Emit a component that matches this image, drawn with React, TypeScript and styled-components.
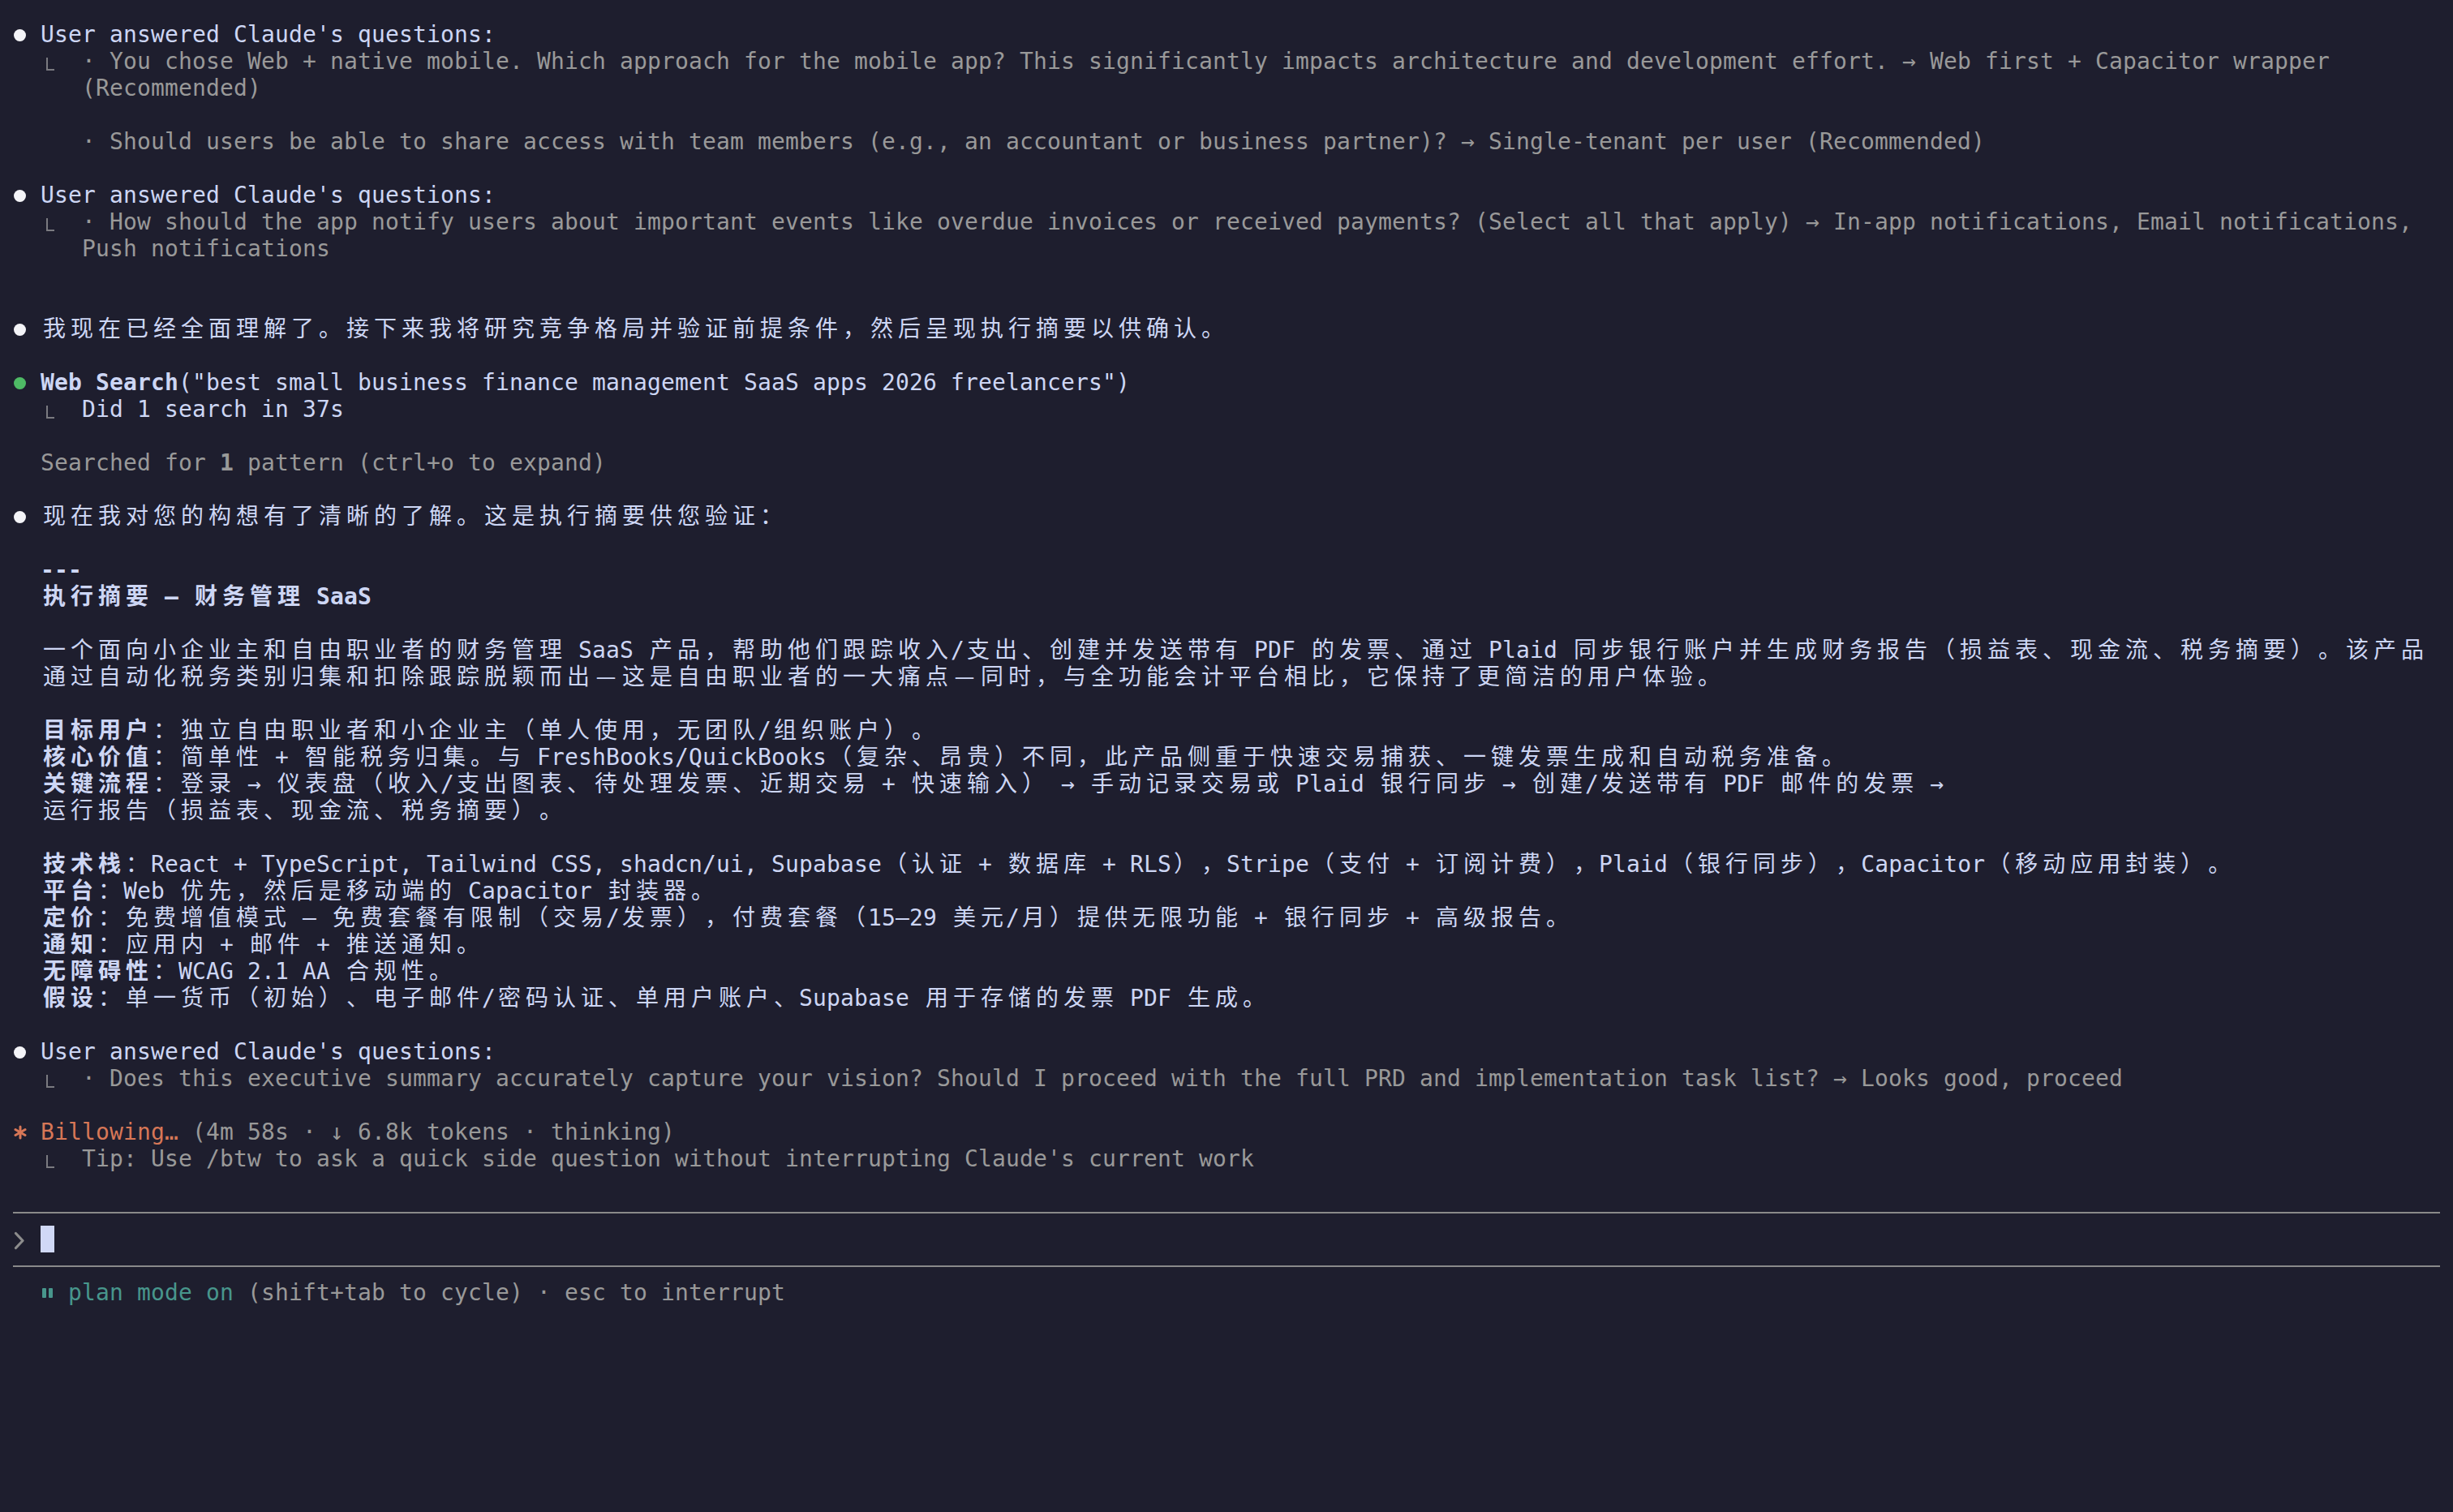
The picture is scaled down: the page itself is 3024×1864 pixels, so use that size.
import React from "react";
import styled, { createGlobalStyle } from "styled-components";

const CELL = 17;

const C = {
  bg: "#1e1e2e",
  text: "#cdd6f4",
  dim: "#999999",
  faint: "#7a7a80",
  white: "#f4f4f8",
  green: "#4eba65",
  orange: "#d77757",
  teal: "#48968c",
  rule: "#8a8a8a",
};

const Global = createGlobalStyle`
  html, body { margin: 0; padding: 0; background: ${C.bg}; }
  #root { min-height: 100vh; }
`;

const Screen = styled.main`
  box-sizing: border-box;
  min-height: 1864px;
  padding: 26px 16px 0;
  background: ${C.bg};
  color: ${C.text};
  font-family: "DejaVu Sans Mono", "Noto Sans CJK SC", monospace;
  font-size: 28px;
  letter-spacing: 0.143px;
  display: flex;
  flex-direction: column;
`;

const Row = styled.div`
  height: 33px;
  line-height: 33px;
  white-space: pre;
  overflow: visible;
`;

const Rule = styled.div`
  height: 33px;
  display: flex;
  align-items: center;
  &::before {
    content: "";
    flex: 1;
    height: 2px;
    background: ${C.rule};
  }
`;

const Wide = styled.span`
  display: inline-block;
  width: ${CELL * 2}px;
  line-height: 28px;
  text-align: center;
  letter-spacing: 0;
  font-family: "Noto Sans CJK SC", "DejaVu Sans Mono", sans-serif;
`;

const Dim = styled.span`
  color: ${C.dim};
`;
const Strong = styled.span`
  font-weight: 700;
`;
const Tone = styled.span<{ $c: string }>`
  color: ${(p) => p.$c};
`;

const Glyph = styled.span<{ $w: number }>`
  display: inline-flex;
  align-items: flex-start;
  vertical-align: top;
  width: ${(p) => p.$w * CELL}px;
  height: 33px;
`;

const Dot = styled.span<{ $c: string }>`
  width: 15px;
  height: 15px;
  margin: 10px 0 0 1px;
  border-radius: 50%;
  background: ${(p) => p.$c};
`;

const ElbowMark = styled.span`
  box-sizing: border-box;
  width: 10px;
  height: 16px;
  margin: 12px 0 0 7px;
  border-left: 2px solid ${C.faint};
  border-bottom: 2px solid ${C.faint};
`;

const PauseBars = styled.span`
  display: flex;
  gap: 3px;
  margin: 11px 0 0 2px;
  & > i {
    display: block;
    width: 5px;
    height: 12px;
    border-radius: 1px;
    background: ${C.teal};
  }
`;

const Cursor = styled.span`
  display: inline-block;
  vertical-align: top;
  width: ${CELL}px;
  height: 33px;
  background: #d0d8f6;
`;

const WIDE =
  /[\u1100-\u115f\u2e80-\u303e\u3041-\u33ff\u3400-\u4dbf\u4e00-\u9fff\ua000-\ua4cf\uac00-\ud7a3\uf900-\ufaff\ufe30-\ufe4f\uff00-\uff60\uffe0-\uffe6\u2014]/;

function t(s: string): React.ReactNode[] {
  const out: React.ReactNode[] = [];
  let buf = "";
  let k = 0;
  for (const ch of Array.from(s)) {
    if (WIDE.test(ch)) {
      if (buf) out.push(buf);
      buf = "";
      out.push(<Wide key={k++}>{ch}</Wide>);
    } else {
      buf += ch;
    }
  }
  if (buf) out.push(buf);
  return out;
}

const Bullet = ({ color = C.white }: { color?: string }) => (
  <Glyph $w={2}>
    <Dot $c={color} />
  </Glyph>
);

const Elbow = () => (
  <>
    {"  "}
    <Glyph $w={1}>
      <ElbowMark />
    </Glyph>
    {"  "}
  </>
);

const Star = () => (
  <Glyph $w={2}>
    <svg width="16" height="18" viewBox="0 0 16 18" style={{ marginTop: 8, marginLeft: 1 }}>
      <g stroke={C.orange} strokeWidth="3" strokeLinecap="round">
        <line x1="8" y1="2" x2="8" y2="16" />
        <line x1="2" y1="5.5" x2="14" y2="12.5" />
        <line x1="2" y1="12.5" x2="14" y2="5.5" />
      </g>
    </svg>
  </Glyph>
);

const Chevron = () => (
  <Glyph $w={2}>
    <svg width="14" height="23" viewBox="0 0 14 23" style={{ marginTop: 7, marginLeft: 1 }}>
      <polyline points="2.5,2.5 11,11.5 2.5,20.5" fill="none" stroke="#8c8c8c" strokeWidth="3.2" strokeLinecap="round" strokeLinejoin="round" />
    </svg>
  </Glyph>
);

const Pause = () => (
  <Glyph $w={1}>
    <PauseBars>
      <i />
      <i />
    </PauseBars>
  </Glyph>
);

const Blank = () => <Row />;

const Field = ({ label, text }: { label: string; text: string }) => (
  <Row>
    {"  "}
    <Strong>{t(label)}</Strong>
    {t("：" + text)}
  </Row>
);

export default function App() {
  return (
    <>
      <Global />
      <Screen>
        <Row>
          <Bullet />
          {"User answered Claude's questions:"}
        </Row>
        <Row>
          <Elbow />
          <Dim>
            {"· You chose Web + native mobile. Which approach for the mobile app? This significantly impacts architecture and development effort. → Web first + Capacitor wrapper"}
          </Dim>
        </Row>
        <Row>
          <Dim>{"     (Recommended)"}</Dim>
        </Row>
        <Blank />
        <Row>
          <Dim>
            {"     · Should users be able to share access with team members (e.g., an accountant or business partner)? → Single-tenant per user (Recommended)"}
          </Dim>
        </Row>
        <Blank />
        <Row>
          <Bullet />
          {"User answered Claude's questions:"}
        </Row>
        <Row>
          <Elbow />
          <Dim>
            {"· How should the app notify users about important events like overdue invoices or received payments? (Select all that apply) → In-app notifications, Email notifications,"}
          </Dim>
        </Row>
        <Row>
          <Dim>{"     Push notifications"}</Dim>
        </Row>
        <Blank />
        <Blank />
        <Row>
          <Bullet />
          {t("我现在已经全面理解了。接下来我将研究竞争格局并验证前提条件，然后呈现执行摘要以供确认。")}
        </Row>
        <Blank />
        <Row>
          <Bullet color={C.green} />
          <Strong>Web Search</Strong>
          {'("best small business finance management SaaS apps 2026 freelancers")'}
        </Row>
        <Row>
          <Elbow />
          {"Did 1 search in 37s"}
        </Row>
        <Blank />
        <Row>
          <Dim>
            {"  Searched for "}
            <Strong>1</Strong>
            {" pattern (ctrl+o to expand)"}
          </Dim>
        </Row>
        <Blank />
        <Row>
          <Bullet />
          {t("现在我对您的构想有了清晰的了解。这是执行摘要供您验证：")}
        </Row>
        <Blank />
        <Row>
          {"  "}
          <Strong>---</Strong>
        </Row>
        <Row>
          {"  "}
          <Strong>{t("执行摘要 – 财务管理 SaaS")}</Strong>
        </Row>
        <Blank />
        <Row>
          {"  "}
          {t(
            "一个面向小企业主和自由职业者的财务管理 SaaS 产品，帮助他们跟踪收入/支出、创建并发送带有 PDF 的发票、通过 Plaid 同步银行账户并生成财务报告（损益表、现金流、税务摘要）。该产品"
          )}
        </Row>
        <Row>
          {"  "}
          {t("通过自动化税务类别归集和扣除跟踪脱颖而出—这是自由职业者的一大痛点—同时，与全功能会计平台相比，它保持了更简洁的用户体验。")}
        </Row>
        <Blank />
        <Field label="目标用户" text="独立自由职业者和小企业主（单人使用，无团队/组织账户）。" />
        <Field
          label="核心价值"
          text="简单性 + 智能税务归集。与 FreshBooks/QuickBooks（复杂、昂贵）不同，此产品侧重于快速交易捕获、一键发票生成和自动税务准备。"
        />
        <Field
          label="关键流程"
          text="登录 → 仪表盘（收入/支出图表、待处理发票、近期交易 + 快速输入） → 手动记录交易或 Plaid 银行同步 → 创建/发送带有 PDF 邮件的发票 →"
        />
        <Row>
          {"  "}
          {t("运行报告（损益表、现金流、税务摘要）。")}
        </Row>
        <Blank />
        <Field
          label="技术栈"
          text="React + TypeScript, Tailwind CSS, shadcn/ui, Supabase（认证 + 数据库 + RLS），Stripe（支付 + 订阅计费），Plaid（银行同步），Capacitor（移动应用封装）。"
        />
        <Field label="平台" text="Web 优先，然后是移动端的 Capacitor 封装器。" />
        <Field
          label="定价"
          text="免费增值模式 – 免费套餐有限制（交易/发票），付费套餐（15–29 美元/月）提供无限功能 + 银行同步 + 高级报告。"
        />
        <Field label="通知" text="应用内 + 邮件 + 推送通知。" />
        <Field label="无障碍性" text="WCAG 2.1 AA 合规性。" />
        <Field label="假设" text="单一货币（初始）、电子邮件/密码认证、单用户账户、Supabase 用于存储的发票 PDF 生成。" />
        <Blank />
        <Row>
          <Bullet />
          {"User answered Claude's questions:"}
        </Row>
        <Row>
          <Elbow />
          <Dim>
            {"· Does this executive summary accurately capture your vision? Should I proceed with the full PRD and implementation task list? → Looks good, proceed"}
          </Dim>
        </Row>
        <Blank />
        <Row>
          <Star />
          <Tone $c={C.orange}>{"Billowing…"}</Tone>
          <Dim>{" (4m 58s · ↓ 6.8k tokens · thinking)"}</Dim>
        </Row>
        <Row>
          <Elbow />
          <Dim>{"Tip: Use /btw to ask a quick side question without interrupting Claude's current work"}</Dim>
        </Row>
        <Blank />
        <Rule />
        <Row>
          <Chevron />
          <Cursor />
        </Row>
        <Rule />
        <Row>
          {"  "}
          <Pause />
          {" "}
          <Tone $c={C.teal}>plan mode on</Tone>
          <Dim>{" (shift+tab to cycle) · esc to interrupt"}</Dim>
        </Row>
      </Screen>
    </>
  );
}
